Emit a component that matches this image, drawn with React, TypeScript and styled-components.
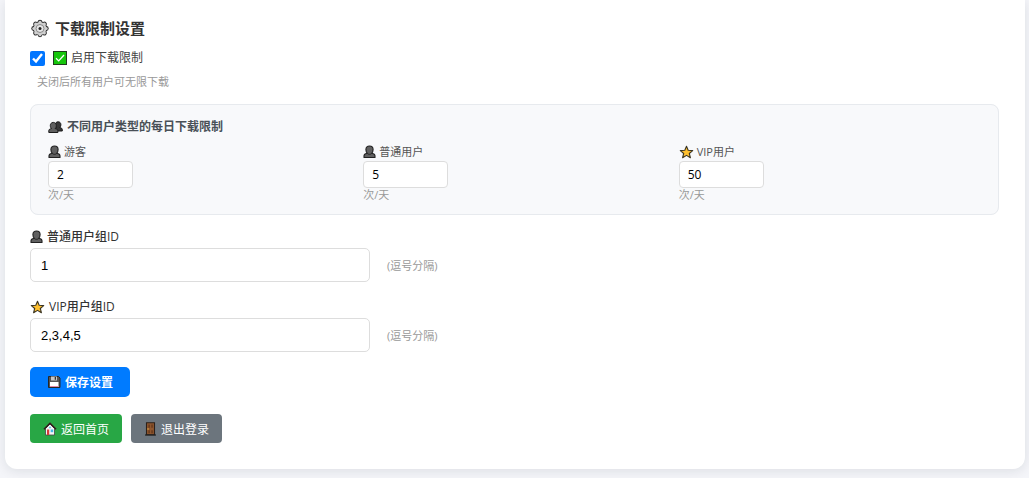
import React from "react";
import styled, { createGlobalStyle } from "styled-components";

const uiFont = `"Open Sans", "Noto Sans CJK SC", sans-serif`;

const GlobalStyle = createGlobalStyle`
  *, *::before, *::after { box-sizing: border-box; }
  body {
    margin: 0;
    background: #f4f5f9;
    color: #333;
    font-family: ${uiFont};
    font-size: 12px;
  }
`;

const Page = styled.div`
  display: flow-root;
  overflow: hidden;
`;

const Card = styled.main`
  margin: 0 4px 9px 5px;
  padding: 18px 26px 26px 25px;
  background: #fff;
  border-radius: 0 0 12px 12px;
  box-shadow: 0 2px 12px rgba(20, 25, 40, 0.1);
`;

const Form = styled.form`
  margin: 0;
`;

const Heading = styled.h2`
  display: flex;
  align-items: center;
  gap: 5px;
  margin: 0 0 10px;
  font-size: 15px;
  line-height: 20px;
  font-weight: 600;
  color: #333;
`;

const ToggleRow = styled.label`
  display: flex;
  align-items: center;
  width: fit-content;
  line-height: 20px;
  color: #444;
`;

const Checkbox = styled.input`
  width: 15px;
  height: 15px;
  margin: 0 8px 0 0;
  accent-color: #0075ff;
`;

const ToggleText = styled.span`
  display: flex;
  align-items: center;
  gap: 4px;
`;

const Note = styled.p`
  margin: 7px 0 15px;
  padding-left: 7px;
  font-size: 11px;
  line-height: 14px;
  color: #999;
`;

const Panel = styled.fieldset`
  margin: 0;
  padding: 13px 17px 12px;
  min-width: 0;
  background: #f8f9fb;
  border: 1px solid #e7eaee;
  border-radius: 8px;
`;

const PanelTitle = styled.h3`
  display: flex;
  align-items: center;
  gap: 4px;
  margin: 0 0 9px;
  font-size: 12px;
  line-height: 18px;
  font-weight: 600;
  color: #495057;
`;

const LimitGrid = styled.div`
  display: grid;
  grid-template-columns: repeat(3, minmax(0, 1fr));
  gap: 13px;
`;

const Limit = styled.div`
  display: flex;
  flex-direction: column;
  align-items: flex-start;
`;

const LimitLabel = styled.label`
  display: flex;
  align-items: center;
  gap: 3px;
  margin-bottom: 2px;
  font-size: 11px;
  line-height: 14px;
  color: #555;
`;

const LimitInput = styled.input`
  width: 85px;
  height: 27px;
  padding: 0 8px;
  border: 1px solid #ddd;
  border-radius: 4px;
  background: #fff;
  color: #000;
  font-family: ${uiFont};
  font-size: 12px;
  appearance: textfield;
  &::-webkit-inner-spin-button { display: none; }
`;

const Unit = styled.span`
  font-size: 11px;
  line-height: 14px;
  color: #999;
`;

const Field = styled.div<{ $gap: number }>`
  margin-top: ${(p) => p.$gap}px;
`;

const FieldLabel = styled.label`
  display: flex;
  align-items: center;
  gap: 4px;
  width: fit-content;
  margin-bottom: 3px;
  line-height: 16px;
  font-weight: 500;
  color: #333;
`;

const FieldRow = styled.div`
  display: flex;
  align-items: center;
  gap: 17px;
`;

const TextInput = styled.input`
  width: 340px;
  height: 34px;
  padding: 0 10px;
  border: 1px solid #ddd;
  border-radius: 5px;
  background: #fff;
  color: #000;
  font-family: "Liberation Sans", Arial, sans-serif;
  font-size: 13px;
`;

const FieldHint = styled.span`
  font-size: 11px;
  color: #999;
`;

const SaveButton = styled.button`
  display: flex;
  align-items: center;
  gap: 4px;
  height: 30px;
  margin-top: 15px;
  padding: 0 17px;
  border: 0;
  border-radius: 5px;
  background: #007bff;
  color: #fff;
  font-family: ${uiFont};
  font-size: 12px;
  font-weight: 600;
`;

const Links = styled.nav`
  display: flex;
  gap: 9px;
  margin-top: 17px;
`;

const ButtonLink = styled.a<{ $color: string }>`
  display: flex;
  align-items: center;
  gap: 4px;
  height: 29px;
  padding: 0 13px;
  border-radius: 4px;
  background: ${(p) => p.$color};
  color: #fff;
  text-decoration: none;
`;

const Svg = styled.svg`
  display: block;
  flex: none;
`;

const gearAngles = [0, 45, 90, 135, 180, 225, 270, 315];

const GearIcon = () => (
  <Svg width="20" height="20" viewBox="0 0 20 20" aria-hidden="true">
    <g transform="translate(10 10.500)">
      {gearAngles.map((a) => (
        <circle key={a} cx="0" cy="-6.300" r="2.400" fill="#333" transform={`rotate(${a})`} />
      ))}
      <circle r="7.200" fill="#333" />
      {gearAngles.map((a) => (
        <circle key={a} cx="0" cy="-6.100" r="1.600" fill="#d0d0d0" transform={`rotate(${a})`} />
      ))}
      <circle r="6.300" fill="#d0d0d0" />
      <circle r="4" fill="#e6e6e6" stroke="#8a8a8a" strokeWidth="1" />
      <circle r="1.500" fill="#222" />
    </g>
  </Svg>
);

const CheckIcon = () => (
  <Svg width="14" height="14" viewBox="0 0 14 14" aria-hidden="true">
    <rect x=".5" y=".5" width="13" height="13" fill="#16c60c" stroke="#1f3d1c" />
    <path d="M3 7.200l2.700 2.700L11 4" fill="none" stroke="#fff" strokeWidth="1.300" />
  </Svg>
);

const PersonIcon = () => (
  <Svg width="13" height="14" viewBox="0 0 13 14" aria-hidden="true">
    <path
      d="M1 12.500V10.800C1 9.300 2.200 8.700 4.300 8.300 3.200 7.300 2.900 6 2.900 4.500 2.900 2.400 4.400 1 6.500 1s3.600 1.400 3.600 3.500c0 1.500-.3 2.800-1.400 3.800 2.100.4 3.300 1 3.300 2.500v1.700z"
      fill="#606060"
      stroke="#222"
      strokeWidth="1.100"
      strokeLinejoin="round"
    />
    <path d="M4.300 8.500c1.300 1.100 3.100 1.100 4.400 0" fill="none" stroke="#222" strokeWidth="1" />
  </Svg>
);

const PeopleIcon = () => (
  <Svg width="15" height="14" viewBox="0 0 15 14" aria-hidden="true">
    <path
      d="M7 11V9l1.300-1.500C7.500 6.600 7.300 5.700 7.300 4.700c0-1.700 1.100-2.900 2.800-2.900s2.800 1.200 2.800 2.900c0 1.200-.3 2.100-1.100 2.900 1.700.3 2.500.9 2.500 2.100V11z"
      fill="#383838"
      stroke="#1c1c1c"
    />
    <path
      d="M.8 12.500v-1.700c0-1.300.9-1.900 2.700-2.200C2.600 7.700 2.300 6.700 2.300 5.500c0-1.800 1.200-3.100 3-3.100s3 1.300 3 3.100c0 1.200-.3 2.200-1.200 3.100 1.800.3 2.800.9 2.800 2.200v1.700z"
      fill="#606060"
      stroke="#1c1c1c"
      strokeLinejoin="round"
    />
  </Svg>
);

const StarIcon = () => (
  <Svg width="15" height="14" viewBox="0 0 15 14" aria-hidden="true">
    <path
      d="M7.500 1.200l1.700 4 4.500.4-3.400 2.900 1.100 4.200-3.900-2.300-3.900 2.300 1.100-4.200-3.400-2.900 4.500-.4z"
      fill="#ffc02e"
      stroke="#3b3524"
      strokeWidth="1.100"
      strokeLinejoin="round"
    />
  </Svg>
);

const DiskIcon = () => (
  <Svg width="14" height="14" viewBox="0 0 14 14" aria-hidden="true">
    <path d="M1.500 1.500h10l1.500 1.500v9.500H1.500z" fill="#555" stroke="#262626" strokeWidth="1" />
    <path d="M4 1.500h6v4H4z" fill="#c8c8c8" />
    <path d="M7.700 2h1.300v2.700H7.700z" fill="#333" />
    <path d="M3 7h8.500v5H3z" fill="#fff" />
    <path d="M3 11h8.500v1H3z" fill="#e58aa8" />
  </Svg>
);

const HouseIcon = () => (
  <Svg width="14" height="14" viewBox="0 0 14 14" aria-hidden="true">
    <path d="M2.500 6.500L7 2l4.500 4.500v6.500h-9z" fill="#f4f4f4" stroke="#444" strokeWidth=".8" />
    <path d="M1 7.300L7 1.300l6 6" fill="none" stroke="#33191b" strokeWidth="1.500" />
    <path d="M4 7.500h2.200V13H4z" fill="#d83b3b" />
    <path d="M7.700 7.500h2.500v2.700H7.700z" fill="#43b9e8" />
    <path d="M6.200 4.700h1.600v1.500H6.200z" fill="#43b9e8" />
  </Svg>
);

const DoorIcon = () => (
  <Svg width="13" height="14" viewBox="0 0 13 14" aria-hidden="true">
    <path d="M2.500.800h8v12h-8z" fill="#8e562e" stroke="#2c2019" strokeWidth="1.100" />
    <path d="M4.300 2.500h1.700v3.300H4.300zM7.200 2.500h1.700v3.300H7.200zM4.300 8.200h1.700v3H4.300zM7.200 8.200h1.700v3H7.200z" fill="#6c3d1e" />
    <circle cx="4" cy="7" r=".7" fill="#f3c04c" />
    <path d="M1 13h11" stroke="#222" strokeWidth="1.200" />
  </Svg>
);

const limits = [
  { id: "guest", label: "游客", value: 2, Icon: PersonIcon },
  { id: "member", label: "普通用户", value: 5, Icon: PersonIcon },
  { id: "vip", label: "VIP用户", value: 50, Icon: StarIcon },
];

const groups = [
  { id: "memberGroup", label: "普通用户组ID", value: "1", Icon: PersonIcon, gap: 14 },
  { id: "vipGroup", label: "VIP用户组ID", value: "2,3,4,5", Icon: StarIcon, gap: 17 },
];

export default function App() {
  return (
    <Page>
      <GlobalStyle />
      <Card>
        <Form onSubmit={(e: React.FormEvent) => e.preventDefault()}>
          <Heading>
            <GearIcon />
            下载限制设置
          </Heading>
          <ToggleRow>
            <Checkbox type="checkbox" defaultChecked />
            <ToggleText>
              <CheckIcon />
              启用下载限制
            </ToggleText>
          </ToggleRow>
          <Note>关闭后所有用户可无限下载</Note>
          <Panel aria-labelledby="limits-title">
            <PanelTitle id="limits-title">
              <PeopleIcon />
              不同用户类型的每日下载限制
            </PanelTitle>
            <LimitGrid>
              {limits.map(({ id, label, value, Icon }) => (
                <Limit key={id}>
                  <LimitLabel htmlFor={id}>
                    <Icon />
                    {label}
                  </LimitLabel>
                  <LimitInput id={id} type="number" min={0} defaultValue={value} />
                  <Unit>次/天</Unit>
                </Limit>
              ))}
            </LimitGrid>
          </Panel>
          {groups.map(({ id, label, value, Icon, gap }) => (
            <Field key={id} $gap={gap}>
              <FieldLabel htmlFor={id}>
                <Icon />
                {label}
              </FieldLabel>
              <FieldRow>
                <TextInput id={id} type="text" defaultValue={value} />
                <FieldHint>(逗号分隔)</FieldHint>
              </FieldRow>
            </Field>
          ))}
          <SaveButton type="submit">
            <DiskIcon />
            保存设置
          </SaveButton>
        </Form>
        <Links>
          <ButtonLink href="#home" $color="#28a745">
            <HouseIcon />
            返回首页
          </ButtonLink>
          <ButtonLink href="#logout" $color="#6c757d">
            <DoorIcon />
            退出登录
          </ButtonLink>
        </Links>
      </Card>
    </Page>
  );
}
